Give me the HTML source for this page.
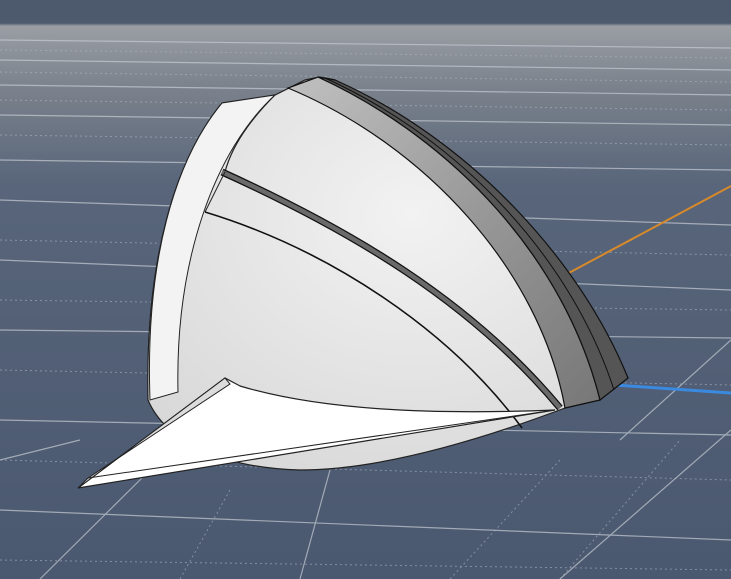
<!DOCTYPE html>
<html><head><style>html,body{margin:0;padding:0;background:#4b596e}svg{display:block}</style></head>
<body>
<svg width="731" height="579" viewBox="0 0 731 579" xmlns="http://www.w3.org/2000/svg">
<defs>
<linearGradient id="bg" x1="0" y1="0" x2="0" y2="1">
<stop offset="0" stop-color="#4d5a6e"/>
<stop offset="0.04" stop-color="#4d5a6e"/>
<stop offset="0.045" stop-color="#9a9ea4"/>
<stop offset="0.15" stop-color="#7b828c"/>
<stop offset="0.32" stop-color="#58657a"/>
<stop offset="1" stop-color="#4a5870"/>
</linearGradient>
<linearGradient id="g1" x1="0" y1="0" x2="1" y2="1">
<stop offset="0" stop-color="#c0c0c0"/><stop offset="0.5" stop-color="#999"/><stop offset="1" stop-color="#777"/>
</linearGradient>
<radialGradient id="dome" cx="0.55" cy="0.35" r="0.8">
<stop offset="0" stop-color="#f2f2f2"/><stop offset="1" stop-color="#d6d6d6"/>
</radialGradient>
</defs>
<rect width="731" height="579" fill="url(#bg)"/>
<g stroke="#c6ccd4" stroke-width="1.2" opacity="0.7" fill="none">
<path d="M0,40 L731,48"/><path d="M0,60 L731,70"/><path d="M0,85 L731,95"/><path d="M0,115 L731,125"/>
<path d="M0,160 L731,170"/><path d="M0,200 L731,225"/><path d="M0,260 L731,290"/><path d="M0,330 L731,338"/>
<path d="M0,420 L731,435"/><path d="M0,510 L731,540"/>
<path d="M620,440 L731,340"/><path d="M560,579 L731,430"/><path d="M40,579 L150,470"/>
<path d="M300,579 L330,470"/><path d="M0,460 L80,440"/>
</g>
<g stroke="#aab3c0" stroke-width="1" stroke-dasharray="2,3" opacity="0.6" fill="none">
<path d="M0,50 L731,58"/><path d="M0,72 L731,82"/><path d="M0,100 L731,110"/><path d="M0,135 L731,145"/>
<path d="M0,240 L731,255"/><path d="M0,300 L731,310"/><path d="M0,370 L731,385"/><path d="M0,460 L731,480"/><path d="M0,560 L731,570"/>
<path d="M560,579 L680,440"/><path d="M450,579 L560,460"/><path d="M180,579 L230,490"/>
</g>
<path d="M565,275 L731,186" stroke="#d88a2a" stroke-width="2"/>
<path d="M600,384 L731,393" stroke="#3a8ae0" stroke-width="3"/>
<path d="M222,103 L275,95 L305,80 L320,77 L335,80 C450,140 570,250 628,378 L600,400 L565,408 C480,440 380,470 300,470 C220,468 165,440 148,400 C145,260 175,160 222,103 Z" fill="url(#dome)" stroke="#222" stroke-width="1.2"/>
<path d="M222,103 L275,95 C215,150 175,260 178,392 L150,400 C145,260 175,160 222,103 Z" fill="#f3f3f3" stroke="#222" stroke-width="1"/>
<path d="M275,95 C250,120 232,145 225,172" fill="none" stroke="#222" stroke-width="1.2"/>
<path d="M288,88 C425,145 540,270 565,408 L600,400 C565,260 455,140 318,77 Z" fill="url(#g1)" stroke="#111" stroke-width="1.2"/>
<path d="M318,77 C455,140 565,260 600,400 L628,378 C580,260 470,140 335,80 Z" fill="#555" stroke="#111" stroke-width="1.2"/>
<path d="M325,78 C462,140 572,260 614,390" fill="none" stroke="#111" stroke-width="1"/>
<path d="M222,172 C350,230 470,300 560,408" fill="none" stroke="#111" stroke-width="7"/>
<path d="M222,172 C350,230 470,300 560,408" fill="none" stroke="#6a6a6a" stroke-width="4.5"/>
<path d="M225,172 L205,212" stroke="#222" stroke-width="1"/>
<path d="M205,212 C330,250 450,330 522,428" fill="none" stroke="#111" stroke-width="1.6"/>
<path d="M78,488 L225,378 L240,386 C320,410 430,415 555,410 Z" fill="#fff" stroke="#222" stroke-width="1.2"/>
<path d="M78,488 L225,378 L230,384 L88,478 Z" fill="#dcdcdc" stroke="#222" stroke-width="1"/>
<path d="M88,478 L555,410" stroke="#222" stroke-width="1"/>
</svg>
</body></html>
